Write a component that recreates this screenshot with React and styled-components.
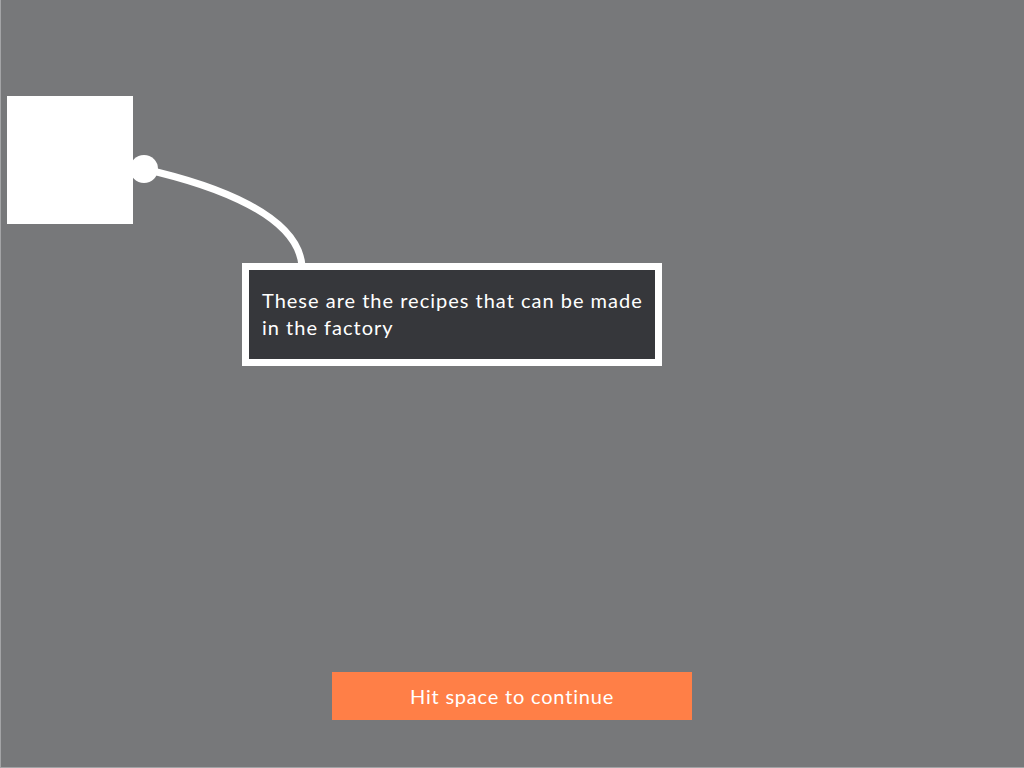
import React from "react"
import styled, { createGlobalStyle } from "styled-components"

const GlobalStyle = createGlobalStyle`
  html, body {
    margin: 0;
    padding: 0;
    background: #77787a;
  }

  * {
    box-sizing: border-box;
  }
`

const App = () => {
  return (
    <>
      <GlobalStyle />
      <Screen>
        <Highlight />
        <Connector width="1024" height="768" viewBox="0 0 1024 768">
          <path
            d="M143 169 C 214 185, 297 215, 301 266"
            fill="none"
            stroke="#fff"
            strokeWidth="7"
          />
          <circle cx="143" cy="169" r="14" fill="#fff" />
        </Connector>
        <Tooltip>These are the recipes that can be made in the factory</Tooltip>
        <ContinueButton>Hit space to continue</ContinueButton>
      </Screen>
    </>
  )
}

export default App

const Screen = styled.div`
  position: relative;
  width: 1024px;
  height: 768px;
  overflow: hidden;
  background: #77787a;
  border-left: 1px solid #a3a4a6;
  border-bottom: 1px solid #a3a4a6;
  display: flex;
  flex-direction: column;
  justify-content: flex-end;
  align-items: center;
  padding-bottom: 47px;
  font-family: Lato, "Open Sans", sans-serif;
`

const Highlight = styled.div`
  position: absolute;
  left: 6px;
  top: 96px;
  width: 126px;
  height: 128px;
  background: #fff;
`

const Connector = styled.svg`
  position: absolute;
  left: 0;
  top: 0;
  pointer-events: none;
`

const Tooltip = styled.div`
  position: absolute;
  left: 241px;
  top: 263px;
  width: 420px;
  height: 103px;
  border: 7px solid #fff;
  background: #36373b;
  color: #fff;
  padding: 17px 8px 0 13px;
  font-size: 20px;
  line-height: 27px;
  letter-spacing: 1px;
`

const ContinueButton = styled.div`
  width: 360px;
  height: 48px;
  margin-left: -1px;
  background: #ff7f47;
  color: #fff;
  display: flex;
  align-items: center;
  justify-content: center;
  font-size: 20px;
  letter-spacing: 0.8px;
`
